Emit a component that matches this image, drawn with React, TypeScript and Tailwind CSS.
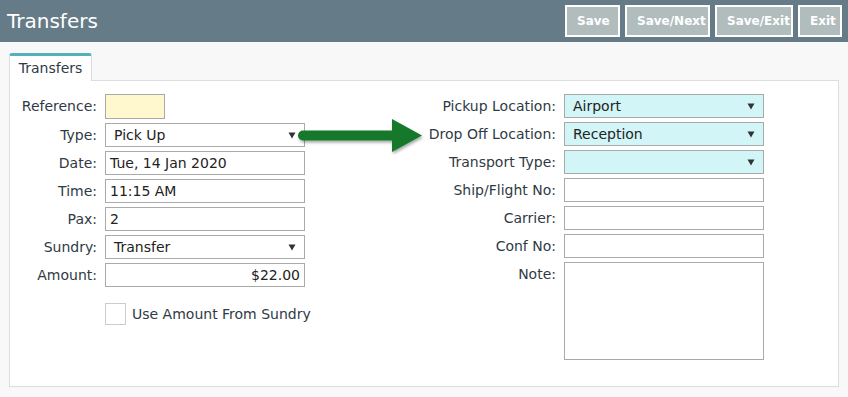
import React from "react";

const font = { fontFamily: '"DejaVu Sans", Verdana, sans-serif' };

function Caret() {
  return (
    <svg width="8" height="7" viewBox="0 0 8 7" className="shrink-0">
      <path d="M0.5 0.5 H7.5 L4 6.5 Z" fill="#333" />
    </svg>
  );
}

function Select({ value, tone = "white" }: { value: string; tone?: "white" | "cyan" }) {
  return (
    <div
      className={`flex h-[24px] w-[200px] shrink-0 items-center justify-between border border-[#aaa] pl-[8px] pr-[8px] text-[14px] text-[#222] ${
        tone === "cyan" ? "bg-[#d2f5f8]" : "bg-white"
      }`}
    >
      <span>{value}</span>
      <Caret />
    </div>
  );
}

function Input({ value = "", align = "left" }: { value?: string; align?: "left" | "right" }) {
  return (
    <div
      className={`flex h-[24px] w-[200px] shrink-0 items-center border border-[#aaa] bg-white px-[4px] text-[14px] text-[#222] ${
        align === "right" ? "justify-end" : ""
      }`}
    >
      {value}
    </div>
  );
}

function Row({ label, labelW, children, top = false }: { label: string; labelW: string; children: React.ReactNode; top?: boolean }) {
  return (
    <div className={`flex gap-[8px] ${top ? "items-start" : "items-center"}`}>
      <label className={`${labelW} shrink-0 whitespace-nowrap text-right text-[14px] text-[#2f3a45] ${top ? "pt-[2px]" : ""}`}>
        {label}
      </label>
      {children}
    </div>
  );
}

export default function App() {
  const btn =
    "h-[32px] border-2 border-white bg-[#b1bdbd] px-[10px] text-[12px] font-bold text-white";
  return (
    <div className="h-[397px] w-[848px] overflow-hidden bg-[#f8f8f8]" style={font}>
      {/* Header */}
      <div className="flex h-[42px] items-center justify-between bg-[#657b87] pl-[7px] pr-[6px]">
        <h1 className="text-[20px] text-white">Transfers</h1>
        <div className="flex gap-[5px]">
          <button className={`${btn} w-[55px]`}>Save</button>
          <button className={`${btn} w-[85px]`}>Save/Next</button>
          <button className={`${btn} w-[78px]`}>Save/Exit</button>
          <button className={`${btn} w-[44px]`}>Exit</button>
        </div>
      </div>

      {/* Body */}
      <div className="px-[9px] pt-[11px]">
        <div className="relative z-10 -mb-px flex h-[28px] w-[83px] items-center justify-center rounded-t-[3px] border border-b-0 border-t-[3px] border-[#ddd] border-t-[#54b1b9] bg-white text-[14px] text-[#2f3a45]">
          Transfers
        </div>
        <div className="relative h-[307px] w-[830px] border border-[#ddd] bg-white pt-[13px]">
          <div className="flex">
            {/* Left column */}
            <div className="flex w-[295px] shrink-0 flex-col gap-[4px]">
              <Row label="Reference:" labelW="w-[87px]">
                <div className="h-[25px] w-[60px] border border-[#aaa] bg-[#fff8cf]" />
              </Row>
              <Row label="Type:" labelW="w-[87px]">
                <Select value="Pick Up" />
              </Row>
              <Row label="Date:" labelW="w-[87px]">
                <Input value="Tue, 14 Jan 2020" />
              </Row>
              <Row label="Time:" labelW="w-[87px]">
                <Input value="11:15 AM" />
              </Row>
              <Row label="Pax:" labelW="w-[87px]">
                <Input value="2" />
              </Row>
              <Row label="Sundry:" labelW="w-[87px]">
                <Select value="Transfer" />
              </Row>
              <Row label="Amount:" labelW="w-[87px]">
                <Input value="$22.00" align="right" />
              </Row>
              <div className="mt-[12px] flex items-center gap-[6px] whitespace-nowrap pl-[95px]">
                <div className="h-[22px] w-[21px] shrink-0 border border-[#ccc] bg-white" />
                <span className="text-[14px] text-[#2f3a45]">Use Amount From Sundry</span>
              </div>
            </div>

            {/* Right column */}
            <div className="ml-[91px] flex flex-col gap-[4px]">
              <Row label="Pickup Location:" labelW="w-[160px]">
                <Select value="Airport" tone="cyan" />
              </Row>
              <Row label="Drop Off Location:" labelW="w-[160px]">
                <Select value="Reception" tone="cyan" />
              </Row>
              <Row label="Transport Type:" labelW="w-[160px]">
                <Select value="" tone="cyan" />
              </Row>
              <Row label="Ship/Flight No:" labelW="w-[160px]">
                <Input />
              </Row>
              <Row label="Carrier:" labelW="w-[160px]">
                <Input />
              </Row>
              <Row label="Conf No:" labelW="w-[160px]">
                <Input />
              </Row>
              <Row label="Note:" labelW="w-[160px]" top>
                <div className="h-[98px] w-[200px] border border-[#aaa] bg-white" />
              </Row>
            </div>
          </div>

          {/* Annotation arrow */}
          <svg
            className="absolute left-[282px] top-[34px]"
            width="140"
            height="40"
            viewBox="0 0 140 40"
          >
            <defs>
              <filter id="sh" x="-10%" y="-30%" width="120%" height="160%">
                <feDropShadow dx="1" dy="2" stdDeviation="1.5" floodColor="#000" floodOpacity="0.35" />
              </filter>
            </defs>
            <path
              d="M11 15.5 H100 V4 L130 20.5 L100 37 V25.5 H11 A5 5 0 0 1 11 15.5 Z"
              fill="#17782a"
              filter="url(#sh)"
            />
          </svg>
        </div>
      </div>
    </div>
  );
}
